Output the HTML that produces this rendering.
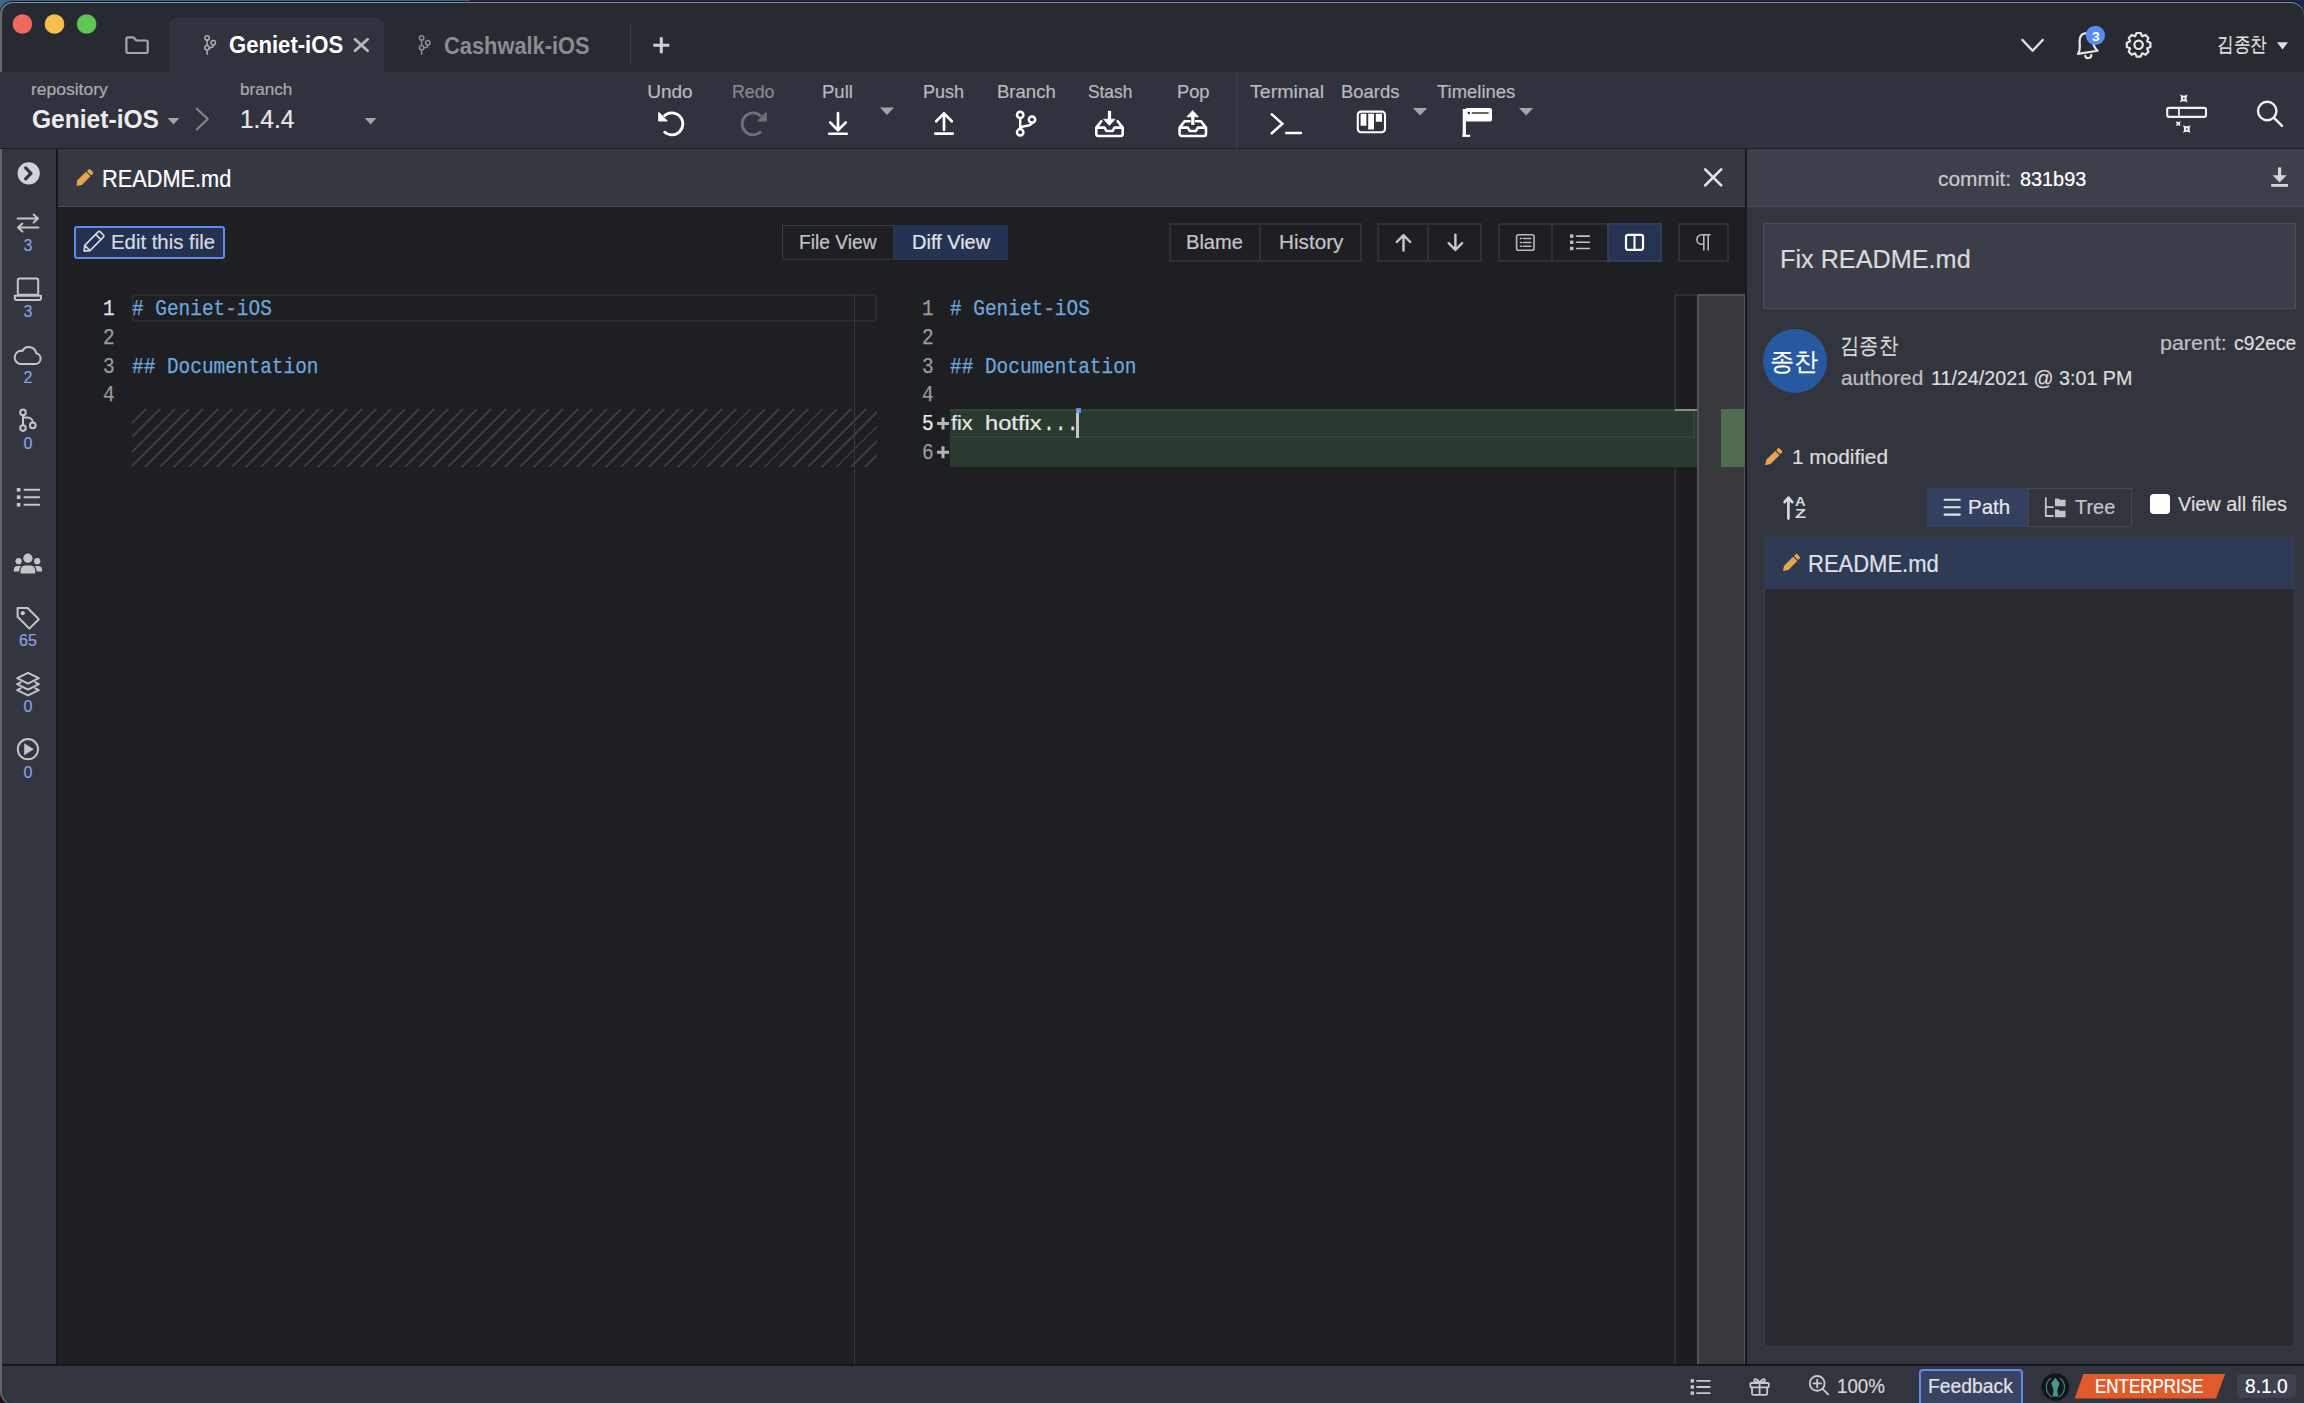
<!DOCTYPE html>
<html><head><meta charset="utf-8"><style>
html,body{margin:0;padding:0;}
body{width:2304px;height:1403px;overflow:hidden;position:relative;background:#1f3558;font-family:"Liberation Sans",sans-serif;}
.a{position:absolute;box-sizing:border-box;}
.t{position:absolute;white-space:pre;line-height:1;transform-origin:0 0;}
.s{font-family:"Liberation Sans",sans-serif;-webkit-text-stroke:0.2px currentColor;}
.m{font-family:"Liberation Mono",monospace;-webkit-text-stroke:0.25px currentColor;}
.sb{font-family:"Liberation Sans",sans-serif;}
svg{position:absolute;overflow:visible;}

</style></head><body>
<!-- desktop strip -->
<div class="a" style="left:0;top:0;width:470px;height:1403px;background:#3f6590"></div><div class="a" style="left:0;top:1300px;width:60px;height:103px;background:#2a0c12"></div>
<div class="a" style="left:470px;top:0;width:1834px;height:6px;background:#1c2650"></div>
<!-- window -->
<div class="a" style="left:0;top:2px;width:2304px;height:1403px;border-radius:13px 13px 14px 14px;background:#282a32;box-shadow:inset 0 1px 0 #8a8c92, inset 2px 0 0 #64666c, 0 0 0 1px #0e1626;"></div>
<!-- active tab -->
<div class="a" style="left:169px;top:18px;width:215px;height:54px;background:#30333d;border-radius:8px 8px 0 0"></div>
<!-- toolbar -->
<div class="a" style="left:0;top:72px;width:2304px;height:76px;background:#30333d"></div>
<div class="a" style="left:0;top:148px;width:2304px;height:1px;background:#1d1e22"></div>
<!-- sidebar -->
<div class="a" style="left:2px;top:149px;width:54px;height:1215px;background:#33363f"></div>
<div class="a" style="left:56px;top:149px;width:2px;height:1216px;background:#18191c"></div>
<!-- editor header -->
<div class="a" style="left:58px;top:149px;width:1687px;height:57px;background:#363841"></div>
<div class="a" style="left:58px;top:206px;width:1687px;height:1px;background:#4b4e57"></div>
<!-- editor body -->
<div class="a" style="left:58px;top:207px;width:1687px;height:1157px;background:#1e1f23"></div>
<!-- right panel -->
<div class="a" style="left:1745px;top:149px;width:2px;height:1216px;background:#17181b"></div>
<div class="a" style="left:1747px;top:149px;width:1557px;height:57px;background:#3d404b"></div>
<div class="a" style="left:1747px;top:206px;width:1557px;height:1px;background:#4b4e59"></div>
<div class="a" style="left:1747px;top:207px;width:1557px;height:1157px;background:#32353e"></div>
<!-- status bar -->
<div class="a" style="left:2px;top:1364px;width:2302px;height:2px;background:#17181b"></div>
<div class="a" style="left:2px;top:1366px;width:2302px;height:37px;background:#32353e;border-bottom-left-radius:12px"></div>
<!-- editor buttons -->
<div class="a" style="left:74px;top:226px;width:151px;height:33px;border:2px solid #5b8cf0;border-radius:3px;background:#253150"></div>
<div class="a" style="left:782px;top:225px;width:112px;height:35px;border:1px solid #393a40"></div>
<div class="a" style="left:894px;top:225px;width:114px;height:35px;background:#263252"></div>
<div class="a" style="left:1169px;top:223px;width:92px;height:39px;border:2px solid #303136"></div>
<div class="a" style="left:1259px;top:223px;width:103px;height:39px;border:2px solid #303136"></div>
<div class="a" style="left:1377px;top:223px;width:52px;height:39px;border:2px solid #303136"></div>
<div class="a" style="left:1427px;top:223px;width:55px;height:39px;border:2px solid #303136"></div>
<div class="a" style="left:1498px;top:223px;width:55px;height:39px;border:2px solid #303136"></div>
<div class="a" style="left:1551px;top:223px;width:58px;height:39px;border:2px solid #303136"></div>
<div class="a" style="left:1607px;top:223px;width:55px;height:39px;border:2px solid #2f3c5a;background:#273352"></div>
<div class="a" style="left:1678px;top:223px;width:51px;height:39px;border:2px solid #303136"></div>
<!-- code area decorations -->
<div class="a" style="left:132px;top:294px;width:745px;height:28px;border:2px solid #2b2b29"></div>
<div class="a" style="left:132px;top:409px;width:745px;height:58px;background:repeating-linear-gradient(-45deg,#1e1f23 0px,#1e1f23 7.25px,#3a3b3f 7.25px,#3a3b3f 9.33px,#1e1f23 9.33px,#1e1f23 10.18px)"></div>
<div class="a" style="left:854px;top:294px;width:1px;height:1070px;background:#37383c"></div>
<div class="a" style="left:1674px;top:294px;width:23px;height:1070px;background:#1c1d21;border-left:2px solid #2d2e32;border-top:2px solid #2d2e32"></div>
<div class="a" style="left:950px;top:409px;width:747px;height:58px;background:#2b3a2e"></div>
<div class="a" style="left:950px;top:409px;width:745px;height:29px;border:2px solid #34443a;border-left:none"></div>
<div class="a" style="left:1675px;top:409px;width:22px;height:2px;background:#8a8b8e"></div>
<div class="a" style="left:1697px;top:294px;width:48px;height:1070px;background:#38393d;border:1px solid #525357;border-width:2px 1px 0 2px"></div>
<div class="a" style="left:1721px;top:409px;width:24px;height:58px;background:#4f6b50"></div>
<div class="a" style="left:1076px;top:409px;width:3px;height:29px;background:#c4c4c4"></div>
<div class="a" style="left:1075.5px;top:408px;width:5px;height:5px;background:#5b8def"></div><div class="a" style="left:1077px;top:409.5px;width:2px;height:2px;background:#8fa0b8"></div>
<!-- right panel components -->
<div class="a" style="left:1763px;top:223px;width:533px;height:86px;background:#3b3e49;border:1px solid #4b4e59"></div>
<div class="a" style="left:1763px;top:329px;width:64px;height:64px;border-radius:50%;background:#2759a0"></div>
<div class="a" style="left:1927px;top:488px;width:102px;height:39px;background:#34405f"></div>
<div class="a" style="left:2028px;top:488px;width:104px;height:39px;border:1px solid #454750"></div>
<div class="a" style="left:2150px;top:493.5px;width:20px;height:20px;border-radius:4px;background:#ffffff"></div>
<div class="a" style="left:1764px;top:537px;width:531px;height:810px;background:#2a2b31;border:1px solid #393b43"></div>
<div class="a" style="left:1765px;top:538px;width:529px;height:51px;background:#2f3a55"></div>
<!-- status bar components -->
<div class="a" style="left:1919px;top:1369px;width:104px;height:40px;border:2px solid #5a8cf0;border-radius:4px;background:#3a4360"></div>
<div class="a" style="left:2237px;top:1374px;width:59px;height:24px;border-radius:4px;background:#3e4250"></div>

<svg style="left:0;top:0;width:2304px;height:1403px" viewBox="0 0 2304 1403" fill="none" stroke-linecap="round" stroke-linejoin="round">
<circle cx="22.4" cy="24" r="9.8" fill="#ee6a5f"/><circle cx="54.5" cy="24" r="9.8" fill="#f5bf4f"/><circle cx="86.6" cy="24" r="9.8" fill="#61c454"/>
<path d="M126.4,38.6 a1.3,1.3 0 0 1 1.3,-1.3 h5.6 l3,3.2 h10.1 a1.3,1.3 0 0 1 1.3,1.3 v9.9 a1.3,1.3 0 0 1 -1.3,1.3 h-18.7 a1.3,1.3 0 0 1 -1.3,-1.3 z" stroke="#a6a7ab" stroke-width="2.2"/>
<g stroke="#aeafb3" stroke-width="1.5"><circle cx="207.1" cy="37.9" r="2.2"/><circle cx="207.1" cy="47.7" r="2.2"/><circle cx="213.29999999999998" cy="42.7" r="2.2"/><path d="M207.1,40.1 V45.5 M207.1,49.9 V54.2 M213.29999999999998,44.9 L212.9,47 L209.29999999999998,48"/></g>
<g stroke="#8b8c91" stroke-width="1.5"><circle cx="421.6" cy="37.9" r="2.2"/><circle cx="421.6" cy="47.7" r="2.2"/><circle cx="427.8" cy="42.7" r="2.2"/><path d="M421.6,40.1 V45.5 M421.6,49.9 V54.2 M427.8,44.9 L427.40000000000003,47 L423.8,48"/></g>
<path d="M355,39.2 L367.6,50.8 M367.6,39.2 L355,50.8" stroke="#b6b7ba" stroke-width="2.8"/>
<path d="M630.5,24.5 V65" stroke="#3a3c44" stroke-width="1.2"/>
<path d="M661.3,37.3 V53.3 M653.3,45.3 H669.3" stroke="#cfd0d3" stroke-width="3" stroke-linecap="butt"/>
<path d="M2022.5,40 L2032.6,50.8 L2042.7,40" stroke="#e2e2e2" stroke-width="2.4"/>
<path transform="rotate(-9 2087 45)" d="M2076.7,52.3 C2080.2,48.6 2079.6,45 2080.2,40.8 C2080.9,35.6 2083.8,33.2 2086.6,33.2 C2089.4,33.2 2092.3,35.6 2093,40.8 C2093.6,45 2093,48.6 2096.5,52.3 Z M2083.6,55.5 a3,2.6 0 0 0 6,0" stroke="#e6e6e6" stroke-width="2.2"/>
<circle cx="2095.4" cy="35.4" r="9.6" fill="#5a8cf0"/>
<path d="M2147.26,41.41 L2150.41,42.69 L2150.41,46.91 L2147.26,48.19 L2147.12,48.53 L2148.44,51.66 L2145.46,54.64 L2142.33,53.32 L2141.99,53.46 L2140.71,56.61 L2136.49,56.61 L2135.21,53.46 L2134.87,53.32 L2131.74,54.64 L2128.76,51.66 L2130.08,48.53 L2129.94,48.19 L2126.79,46.91 L2126.79,42.69 L2129.94,41.41 L2130.08,41.07 L2128.76,37.94 L2131.74,34.96 L2134.87,36.28 L2135.21,36.14 L2136.49,32.99 L2140.71,32.99 L2141.99,36.14 L2142.33,36.28 L2145.46,34.96 L2148.44,37.94 L2147.12,41.07Z" stroke="#e6e6e6" stroke-width="2.2"/><circle cx="2138.6" cy="44.8" r="4.2" stroke="#e6e6e6" stroke-width="2.2"/>
<path d="M2277,42.2 H2288 L2282.5,49.4 Z" fill="#e0e0e0"/>
<path d="M167.7,118 H179.29999999999998 L173.5,124.4 Z" fill="#a4a5a9"/>
<path d="M364.8,118 H376.40000000000003 L370.6,124.4 Z" fill="#a4a5a9"/>
<path d="M196.8,108.8 L207.8,119 L196.8,129.4" stroke="#86888d" stroke-width="2"/>
<path d="M663.9,116.2 A11,11 0 1 1 663.9,131.4" stroke="#ffffff" stroke-width="2.8" stroke-linecap="butt"/>
<path d="M658.8,112.6 V120.8 H667 Z" fill="#ffffff" stroke="#ffffff" stroke-width="1.2"/>
<path d="M761.1,116.2 A11,11 0 1 0 761.1,131.4" stroke="#6f727a" stroke-width="2.8" stroke-linecap="butt"/>
<path d="M766.2,112.6 V120.8 H758 Z" fill="#6f727a" stroke="#6f727a" stroke-width="1.2"/>
<path d="M838,113.2 V130 M830.2,122.4 L838,130.2 L845.8,122.4" stroke="#ffffff" stroke-width="2.7"/><path d="M829.2,133.8 H846.8" stroke="#ffffff" stroke-width="2.6"/>
<path d="M880,107.6 H894 L887,115 Z" fill="#a4a5a9"/>
<path d="M944,129.8 V113.4 M936.2,121.2 L944,113.4 L951.8,121.2" stroke="#ffffff" stroke-width="2.7"/><path d="M935.2,133.6 H952.8" stroke="#ffffff" stroke-width="2.6"/>
<g stroke="#ffffff" stroke-width="2.5"><circle cx="1020.2" cy="114.9" r="3.2"/><circle cx="1020.2" cy="132.3" r="3.2"/><circle cx="1032" cy="119.6" r="3.2"/><path d="M1020.2,118.1 V129.1 M1032,122.8 C1032,127.5 1020.2,124.5 1020.2,129"/></g>
<path d="M1096.3,127.6 V133.8 a2.2,2.2 0 0 0 2.2,2.2 H1120.5 a2.2,2.2 0 0 0 2.2,-2.2 V127.6 L1117.7,121.2 M1096.3,127.6 L1101.3,121.2 M1096.3,127.6 H1104.5 L1106.5,131 H1112.5 L1114.5,127.6 H1122.7" stroke="#ffffff" stroke-width="2.6"/>
<path d="M1109.5,110.8 V121" stroke="#ffffff" stroke-width="3.2" stroke-linecap="butt"/><path d="M1103.9,119.2 H1115.1 L1109.5,125.2 Z" fill="#ffffff" stroke="#ffffff" stroke-width="0.8"/>
<path d="M1179.6,127.6 V133.8 a2.2,2.2 0 0 0 2.2,2.2 H1203.8 a2.2,2.2 0 0 0 2.2,-2.2 V127.6 L1201.0,121.2 M1179.6,127.6 L1184.6,121.2 M1179.6,127.6 H1187.8 L1189.8,131 H1195.8 L1197.8,127.6 H1206.0 M1184.6,121.2 H1189.6 M1201.0,121.2 H1196.0" stroke="#ffffff" stroke-width="2.6"/>
<path d="M1192.8,115.5 V125" stroke="#ffffff" stroke-width="3.2" stroke-linecap="butt"/><path d="M1187.2,116.8 H1198.3999999999999 L1192.8,110.8 Z" fill="#ffffff" stroke="#ffffff" stroke-width="0.8"/>
<path d="M1237.2,74 V147.5" stroke="#3c3f48" stroke-width="1.5"/>
<path d="M1271,113.6 L1282.4,123.8 L1271,134" stroke="#ffffff" stroke-width="2.5" stroke-linecap="butt" stroke-linejoin="miter"/><path d="M1285.2,133 H1302" stroke="#ffffff" stroke-width="2.5" stroke-linecap="butt"/>
<rect x="1357.8" y="111.6" width="27.2" height="20.6" rx="3.2" stroke="#ffffff" stroke-width="2.1"/>
<path d="M1360.6,113.8 h5.8 v12 h-5.8 Z M1368.2,113.8 h5.8 v15.6 h-5.8 Z M1375.8,113.8 h6.2 v8 h-6.2 Z" fill="#ffffff"/>
<path d="M1413,108 H1427.2 L1420.1,115.4 Z" fill="#a4a5a9"/>
<path d="M1464.3,109 V135.6" stroke="#ffffff" stroke-width="3.2" stroke-linecap="butt"/><path d="M1462.3,135.8 H1470.2" stroke="#ffffff" stroke-width="2.2" stroke-linecap="butt"/>
<rect x="1465" y="108" width="27" height="13.6" rx="2.2" fill="#ffffff"/><circle cx="1468.8" cy="113" r="1.3" fill="#30333d"/><path d="M1472.2,113 H1488.2" stroke="#30333d" stroke-width="1.3"/>
<path d="M1519,108 H1533.2 L1526.1,115.4 Z" fill="#a4a5a9"/>
<rect x="2167.2" y="107.9" width="38.8" height="9" rx="1.8" stroke="#f0f0f0" stroke-width="2.1"/><path d="M2178.9,107.9 V116.9" stroke="#f0f0f0" stroke-width="1.8"/>
<path d="M2179.9,94.6 Q2183.8,96.9 2187.7000000000003,94.6 Q2185.4,98.5 2187.7000000000003,102.4 Q2183.8,100.1 2179.9,102.4 Q2182.2000000000003,98.5 2179.9,94.6 Z M2182.9,125.19999999999999 Q2186.8,127.5 2190.7000000000003,125.19999999999999 Q2188.4,129.1 2190.7000000000003,133.0 Q2186.8,130.7 2182.9,133.0 Q2185.2000000000003,129.1 2182.9,125.19999999999999 Z M2175.9,121.19999999999999 Q2178.3,122.6 2180.7000000000003,121.19999999999999 Q2179.3,123.6 2180.7000000000003,126.0 Q2178.3,124.6 2175.9,126.0 Q2177.3,123.6 2175.9,121.19999999999999 Z" fill="#f0f0f0"/>
<circle cx="2183.8" cy="98.5" r="0.9" fill="#30333d"/><circle cx="2186.8" cy="129.1" r="0.9" fill="#30333d"/>
<circle cx="2267.2" cy="111" r="9.2" stroke="#f0f0f0" stroke-width="2.4"/><path d="M2274,117.8 L2282,125.8" stroke="#f0f0f0" stroke-width="2.6"/>
<circle cx="28.7" cy="173.3" r="11.1" fill="#d2d3d6"/><path d="M25.6,167.8 L31,173.3 L25.6,178.8" stroke="#31343e" stroke-width="3.1"/>
<g stroke="#c4c5c8" stroke-width="2"><path d="M17.6,218.6 H38 M33.6,214.6 L38,218.6 L33.6,222.6 M38.4,227.6 H18 M22.4,223.6 L18,227.6 L22.4,231.6"/></g>
<g stroke="#c4c5c8" stroke-width="2"><rect x="17.8" y="278.6" width="20.4" height="16.2" rx="1.5"/><path d="M14.8,295.8 H41 V298 a2,2 0 0 1 -2,2 H16.8 a2,2 0 0 1 -2,-2 Z"/></g>
<path d="M20.2,364 H35.4 a5.4,5.4 0 0 0 0.8,-10.7 a7.4,7.4 0 0 0 -13.8,-2.4 a6.4,6.4 0 0 0 -2.2,13.1 Z" stroke="#c4c5c8" stroke-width="2"/>
<g stroke="#c4c5c8" stroke-width="2"><circle cx="23" cy="412.4" r="2.8"/><circle cx="23" cy="428.1" r="2.8"/><circle cx="32.8" cy="425.4" r="2.8"/><path d="M23,415.2 V425.3 M23,417.5 H27.4 C30.6,417.5 32.8,419.6 32.8,422.6"/></g>
<g fill="#c4c5c8"><rect x="16.8" y="488" width="3.6" height="3.6"/><rect x="16.8" y="495.4" width="3.6" height="3.6"/><rect x="16.8" y="503" width="3.6" height="3.6"/></g><path d="M24.5,489.8 H39.2 M24.5,497.2 H39.2 M24.5,504.8 H39.2" stroke="#c4c5c8" stroke-width="2"/>
<g fill="#c4c5c8"><circle cx="27.9" cy="558.2" r="4.6"/><path d="M20.6,573.4 v-3 a5,5 0 0 1 5,-5 h4.6 a5,5 0 0 1 5,5 v3 Z"/><circle cx="18.6" cy="561.2" r="3.1"/><circle cx="37.2" cy="561.2" r="3.1"/><path d="M13.8,571.4 v-1.6 a3.8,3.8 0 0 1 3.8,-3.8 h3.6 a7,7 0 0 0 -2.2,5.4 Z M42,571.4 v-1.6 a3.8,3.8 0 0 0 -3.8,-3.8 h-3.6 a7,7 0 0 1 2.2,5.4 Z"/></g>
<path d="M17.6,608 H27.6 L38.8,619.2 L29.4,628.6 L17.6,616.8 Z" stroke="#c4c5c8" stroke-width="2"/><circle cx="22.8" cy="613.2" r="2.1" fill="#c4c5c8"/>
<g stroke="#c4c5c8" stroke-width="2"><path d="M28,672.8 L38.8,678.2 L28,683.6 L17.2,678.2 Z"/><path d="M20.6,682.4 L17.2,684.2 L28,689.6 L38.8,684.2 L35.4,682.4 M20.6,688.4 L17.2,690.2 L28,695.4 L38.8,690.2 L35.4,688.4"/></g>
<circle cx="27.9" cy="749.2" r="10.1" stroke="#c4c5c8" stroke-width="2"/><path d="M24.2,743.2 L33.8,749.2 L24.2,755.2 Z" fill="#c4c5c8"/>
<g transform="translate(84,178.2) rotate(-45)"><path d="M-10.75,0 L-6.25,-3.2 H5.95 V3.2 H-6.25 Z" fill="#e3a54e"/><rect x="6.95" y="-3.2" width="3.8" height="6.4" rx="1.6" fill="#e3a54e"/></g>
<path d="M1705.2,169.4 L1721.2,185.4 M1721.2,169.4 L1705.2,185.4" stroke="#e4e4e4" stroke-width="2.7"/>
<g transform="translate(93,242.3) rotate(-45)" stroke="#d3d6dd" stroke-width="1.7"><path d="M-12.5,0 L-8.0,-3.7 H11.0 a1.5,1.5 0 0 1 1.5,1.5 V2.2 a1.5,1.5 0 0 1 -1.5,1.5 H-8.0 Z M7.5,-3.7 V3.7 M-8.0,-3.7 V3.7"/></g>
<path d="M1403.5,250.6 V235.6 M1396.8,242 L1403.5,235.2 L1410.2,242" stroke="#c8c9cc" stroke-width="2.4"/>
<path d="M1455.4,234.6 V249.6 M1448.7,243.2 L1455.4,250 L1462.1,243.2" stroke="#c8c9cc" stroke-width="2.4"/>
<rect x="1516.6" y="234.8" width="17.4" height="15.4" rx="1.8" stroke="#b8b9bc" stroke-width="1.6"/><path d="M1520.4,238.6 h1.4 M1520.4,242.4 h1.4 M1520.4,246.2 h1.4 M1523.6,238.6 h7.2 M1523.6,242.4 h7.2 M1523.6,246.2 h7.2" stroke="#b8b9bc" stroke-width="1.5"/>
<g fill="#c0c1c4"><rect x="1570" y="234.4" width="3.4" height="3.4"/><rect x="1570" y="240.6" width="3.4" height="3.4"/><rect x="1570" y="246.8" width="3.4" height="3.4"/></g><path d="M1576.6,236.1 H1589.4 M1576.6,242.3 H1589.4 M1576.6,248.5 H1589.4" stroke="#c0c1c4" stroke-width="1.6"/>
<rect x="1626" y="234.8" width="17" height="15" rx="2" stroke="#ffffff" stroke-width="2.2"/><path d="M1634.5,235 V249.8" stroke="#ffffff" stroke-width="2"/>
<path d="M1710.6,234.8 H1701.6 a4.7,4.7 0 0 0 0,9.4 H1703.4 M1703.8,234.8 V250.6 M1708.2,234.8 V250.6" stroke="#b8b9bc" stroke-width="1.6" stroke-linecap="butt"/>
<path d="M943,417.4 V429.4 M937,423.4 H949 M943,446.2 V458.2 M937,452.2 H949" stroke="#b3b4b7" stroke-width="3" stroke-linecap="butt"/>
<path d="M2279.6,167.4 V177.2" stroke="#d4d5d8" stroke-width="3.2" stroke-linecap="butt"/><path d="M2272.6,175.2 H2286.6 L2279.6,182.4 Z" fill="#d4d5d8"/><rect x="2271.2" y="184" width="16.8" height="2.8" fill="#d4d5d8"/>
<g transform="translate(1773,457.4) rotate(-45)"><path d="M-11.0,0 L-6.5,-3.0 H6.2 V3.0 H-6.5 Z" fill="#e3a54e"/><rect x="7.2" y="-3.0" width="3.8" height="6" rx="1.6" fill="#e3a54e"/></g>
<path d="M1788.4,518.6 V498 M1784.6,502.2 L1788.4,497.6 L1792.2,502.2" stroke="#dcdde0" stroke-width="2.6"/>
<path d="M1944.6,499.8 H1959.8 M1944.6,507.2 H1959.8 M1944.6,514.6 H1959.8" stroke="#e2e4ea" stroke-width="2.1"/>
<path d="M2045.8,498 V516 H2053 M2045.8,507.2 H2053" stroke="#c3c4c8" stroke-width="1.8"/><g fill="#c3c4c8"><path d="M2055,498.6 h3.6 l1,1.2 h6 v6.4 h-10.6 Z"/><path d="M2055,509.6 h3.6 l1,1.2 h6 v6.4 h-10.6 Z"/></g>
<g transform="translate(1790.8,563.2) rotate(-45)"><path d="M-11.0,0 L-6.5,-3.0 H6.2 V3.0 H-6.5 Z" fill="#e3a54e"/><rect x="7.2" y="-3.0" width="3.8" height="6" rx="1.6" fill="#e3a54e"/></g>
<g fill="#c8c9cc"><rect x="1690.6" y="1379.2" width="3.4" height="3.4"/><rect x="1690.6" y="1385.3" width="3.4" height="3.4"/><rect x="1690.6" y="1391.4" width="3.4" height="3.4"/></g><path d="M1697,1380.9 H1709.8 M1697,1387 H1709.8 M1697,1393.1 H1709.8" stroke="#c8c9cc" stroke-width="1.8"/>
<g stroke="#c8c9cc" stroke-width="1.8"><rect x="1750.4" y="1383" width="18.4" height="4.4" rx="0.8"/><path d="M1752,1387.4 V1393.6 a1.2,1.2 0 0 0 1.2,1.2 H1766 a1.2,1.2 0 0 0 1.2,-1.2 V1387.4 M1759.6,1383 V1394.8 M1759.6,1383 C1757,1378 1753,1378.4 1754.6,1381.6 Z M1759.6,1383 C1762.2,1378 1766.2,1378.4 1764.6,1381.6 Z"/></g>
<circle cx="1817.2" cy="1383.4" r="7.4" stroke="#c8c9cc" stroke-width="1.9"/><path d="M1822.6,1388.8 L1828.2,1394.4 M1817.2,1379.6 V1387.2 M1813.4,1383.4 H1821" stroke="#c8c9cc" stroke-width="1.9"/>
<circle cx="2055.4" cy="1387" r="13.8" fill="#14141e"/>
<path d="M2055.4,1377.8 L2059.6,1383.2 L2057.4,1389.4 V1391.6 L2058.4,1396.4 H2052.4 L2053.4,1391.6 V1389.4 L2051.2,1383.2 Z" fill="#479686"/>
<path d="M2050.6,1378.6 C2045,1382.5 2044.6,1392.5 2051.6,1396.8 M2060.2,1378.6 C2065.8,1382.5 2066.2,1392.5 2059.2,1396.8" stroke="#3a8676" stroke-width="1.2"/>
<path d="M2083.4,1374 H2225.2 L2216,1398.4 H2074.6 Z" fill="#e05a2b"/>
</svg>
<div class="t sb" style="left:228.50px;top:34.20px;font-size:23.5px;color:#ffffff;font-weight:700;transform:scaleX(0.9399);">Geniet-iOS</div>
<div class="t sb" style="left:443.80px;top:34.60px;font-size:23.5px;color:#8b8c91;font-weight:700;transform:scaleX(0.9292);">Cashwalk-iOS</div>
<div class="t s" style="left:2217.47px;top:34.27px;font-size:20px;color:#e6e6e6;transform:scaleX(0.8305);">김종찬</div>
<div class="t s" style="left:31.34px;top:80.73px;font-size:16.5px;color:#a9abb0;transform:scaleX(1.0596);">repository</div>
<div class="t s" style="left:239.96px;top:80.73px;font-size:16.5px;color:#a9abb0;transform:scaleX(1.0350);">branch</div>
<div class="t sb" style="left:31.54px;top:106.81px;font-size:25.5px;color:#ececec;font-weight:700;transform:scaleX(0.9636);">Geniet-iOS</div>
<div class="t s" style="left:240.24px;top:106.81px;font-size:25.5px;color:#e8e8e8;transform:scaleX(0.9580);">1.4.4</div>
<div class="t s" style="left:647.20px;top:81.81px;font-size:19px;color:#b9babd;">Undo</div>
<div class="t s" style="left:732.07px;top:81.81px;font-size:19px;color:#88898d;transform:scaleX(0.9349);">Redo</div>
<div class="t s" style="left:821.83px;top:81.81px;font-size:19px;color:#b9babd;transform:scaleX(0.9742);">Pull</div>
<div class="t s" style="left:922.65px;top:81.81px;font-size:19px;color:#b9babd;transform:scaleX(0.9487);">Push</div>
<div class="t s" style="left:997.12px;top:81.81px;font-size:19px;color:#b9babd;transform:scaleX(0.9755);">Branch</div>
<div class="t s" style="left:1088.20px;top:81.81px;font-size:19px;color:#b9babd;transform:scaleX(0.9121);">Stash</div>
<div class="t s" style="left:1177.24px;top:81.81px;font-size:19px;color:#b9babd;transform:scaleX(0.9615);">Pop</div>
<div class="t s" style="left:1250.00px;top:81.81px;font-size:19px;color:#b9babd;transform:scaleX(1.0315);">Terminal</div>
<div class="t s" style="left:1341.13px;top:81.81px;font-size:19px;color:#b9babd;transform:scaleX(0.9693);">Boards</div>
<div class="t s" style="left:1437.20px;top:81.81px;font-size:19px;color:#b9babd;transform:scaleX(0.9714);">Timelines</div>
<div class="t s" style="left:102.25px;top:167.73px;font-size:23px;color:#ffffff;transform:scaleX(0.9455);">README.md</div>
<div class="t s" style="left:110.58px;top:231.87px;font-size:20px;color:#d6d9e0;transform:scaleX(1.0174);">Edit this file</div>
<div class="t s" style="left:798.84px;top:232.27px;font-size:20px;color:#c3c4c8;transform:scaleX(0.9598);">File View</div>
<div class="t s" style="left:912.00px;top:232.27px;font-size:20px;color:#e0e3ea;">Diff View</div>
<div class="t s" style="left:1186.20px;top:232.17px;font-size:20px;color:#c3c4c8;transform:scaleX(1.0042);">Blame</div>
<div class="t s" style="left:1278.56px;top:232.17px;font-size:20px;color:#c3c4c8;transform:scaleX(1.0355);">History</div>
<div class="t m" style="left:103.10px;top:299.33px;font-size:21.5px;color:#e0e0e0;transform:scaleX(0.9031);">1</div>
<div class="t m" style="left:103.10px;top:328.03px;font-size:21.5px;color:#9a9b9e;transform:scaleX(0.9031);">2</div>
<div class="t m" style="left:103.10px;top:356.73px;font-size:21.5px;color:#9a9b9e;transform:scaleX(0.9031);">3</div>
<div class="t m" style="left:103.10px;top:385.43px;font-size:21.5px;color:#9a9b9e;transform:scaleX(0.9031);">4</div>
<div class="t m" style="left:922.10px;top:299.33px;font-size:21.5px;color:#9a9b9e;transform:scaleX(0.9031);">1</div>
<div class="t m" style="left:922.10px;top:328.03px;font-size:21.5px;color:#9a9b9e;transform:scaleX(0.9031);">2</div>
<div class="t m" style="left:922.10px;top:356.73px;font-size:21.5px;color:#9a9b9e;transform:scaleX(0.9031);">3</div>
<div class="t m" style="left:922.10px;top:385.43px;font-size:21.5px;color:#9a9b9e;transform:scaleX(0.9031);">4</div>
<div class="t m" style="left:922.10px;top:414.13px;font-size:21.5px;color:#ececec;transform:scaleX(0.9031);">5</div>
<div class="t m" style="left:922.10px;top:442.83px;font-size:21.5px;color:#9a9b9e;transform:scaleX(0.9031);">6</div>
<div class="t m" style="left:132.00px;top:299.33px;font-size:21.5px;color:#6ea6de;transform:scaleX(0.9031);"># Geniet-iOS</div>
<div class="t m" style="left:132.00px;top:356.73px;font-size:21.5px;color:#6ea6de;transform:scaleX(0.9031);">## Documentation</div>
<div class="t m" style="left:950.00px;top:299.33px;font-size:21.5px;color:#6ea6de;transform:scaleX(0.9031);"># Geniet-iOS</div>
<div class="t m" style="left:950.00px;top:356.73px;font-size:21.5px;color:#6ea6de;transform:scaleX(0.9031);">## Documentation</div>
<div class="t s" style="left:950.70px;top:412.84px;font-size:20.5px;color:#e6e6e6;transform:scaleX(1.0588);">fix</div>
<div class="t s" style="left:985.05px;top:412.84px;font-size:20.5px;color:#e6e6e6;transform:scaleX(1.1549);">hotfix</div>
<div class="t m" style="left:1042.60px;top:413.73px;font-size:21.5px;color:#e6e6e6;transform:scaleX(0.9200);">...</div>
<div class="t s" style="left:1938.30px;top:169.27px;font-size:20px;color:#c9cacd;transform:scaleX(1.0447);">commit:</div>
<div class="t s" style="left:2020.30px;top:169.27px;font-size:20px;color:#ffffff;transform:scaleX(0.9923);">831b93</div>
<div class="t s" style="left:1779.66px;top:246.19px;font-size:26px;color:#d9dadc;transform:scaleX(0.9705);">Fix README.md</div>
<div class="t s" style="left:1770.03px;top:349.43px;font-size:25px;color:#ffffff;transform:scaleX(0.9673);">종찬</div>
<div class="t s" style="left:1840.12px;top:335.80px;font-size:21.5px;color:#dcdcdc;transform:scaleX(0.8800);">김종찬</div>
<div class="t s" style="left:2159.93px;top:332.57px;font-size:20px;color:#bdbec1;transform:scaleX(1.0719);">parent:</div>
<div class="t s" style="left:2233.50px;top:332.57px;font-size:20px;color:#dcdcdc;transform:scaleX(0.9663);">c92ece</div>
<div class="t s" style="left:1841.00px;top:368.07px;font-size:20px;color:#bdbec1;transform:scaleX(1.0420);">authored</div>
<div class="t s" style="left:1931.02px;top:368.07px;font-size:20px;color:#dcdcdc;transform:scaleX(0.9845);">11/24/2021 @ 3:01 PM</div>
<div class="t s" style="left:1791.56px;top:447.27px;font-size:20px;color:#dcdcdc;transform:scaleX(1.0405);">1 modified</div>
<div class="t s" style="left:1967.93px;top:496.02px;font-size:21px;color:#e6e8ee;transform:scaleX(0.9730);">Path</div>
<div class="t s" style="left:2074.90px;top:496.02px;font-size:21px;color:#c3c4c8;transform:scaleX(0.9492);">Tree</div>
<div class="t s" style="left:2178.20px;top:493.67px;font-size:20px;color:#dcdcdc;transform:scaleX(0.9929);">View all files</div>
<div class="t s" style="left:1808.34px;top:553.13px;font-size:23px;color:#dfe1e6;transform:scaleX(0.9559);">README.md</div>
<div class="t sb" style="left:2092.00px;top:29.69px;font-size:13px;color:#ffffff;font-weight:700;transform:scaleX(1.0714);">3</div>
<div class="t sb" style="left:1794.50px;top:496.44px;font-size:12px;color:#d8d9dc;font-weight:700;transform:scaleX(1.2222);">A</div>
<div class="t sb" style="left:1795.00px;top:508.44px;font-size:12px;color:#d8d9dc;font-weight:700;transform:scaleX(1.5000);">Z</div>
<div class="t s" style="left:1837.34px;top:1376.89px;font-size:19.5px;color:#d6d7da;transform:scaleX(0.9622);">100%</div>
<div class="t s" style="left:1928.03px;top:1376.47px;font-size:20px;color:#e0e3ea;transform:scaleX(0.9655);">Feedback</div>
<div class="t s" style="left:2095.13px;top:1376.89px;font-size:19.5px;color:#ffffff;transform:scaleX(0.8689);">ENTERPRISE</div>
<div class="t s" style="left:2244.80px;top:1376.47px;font-size:20px;color:#ffffff;transform:scaleX(0.9581);">8.1.0</div>
<div class="t s" style="left:23.50px;top:238.45px;font-size:16px;color:#8d9fe4;">3</div>
<div class="t s" style="left:23.50px;top:304.45px;font-size:16px;color:#8d9fe4;">3</div>
<div class="t s" style="left:23.50px;top:369.95px;font-size:16px;color:#8d9fe4;">2</div>
<div class="t s" style="left:23.50px;top:435.85px;font-size:16px;color:#8d9fe4;">0</div>
<div class="t s" style="left:19.05px;top:633.45px;font-size:16px;color:#8d9fe4;">65</div>
<div class="t s" style="left:23.50px;top:699.15px;font-size:16px;color:#8d9fe4;">0</div>
<div class="t s" style="left:23.50px;top:765.05px;font-size:16px;color:#8d9fe4;">0</div>
</body></html>
